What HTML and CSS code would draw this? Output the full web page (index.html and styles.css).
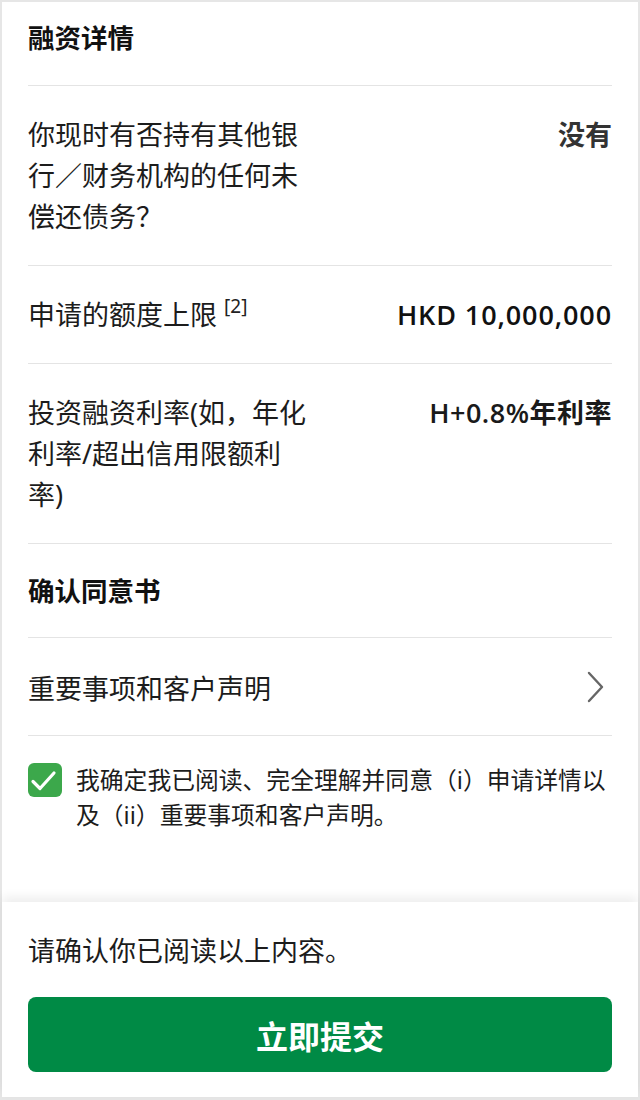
FILE: index.html
```html
<!DOCTYPE html>
<html lang="zh-CN">
<head>
<meta charset="utf-8">
<title>融资详情</title>
<link rel="stylesheet" href="styles.css">
</head>
<body>
<div class="screen">
  <main class="content">
    <h2 class="section-title first">融资详情</h2>
    <div class="row">
      <div class="label">你现时有否持有其他银行／财务机构的任何未偿还债务？</div>
      <div class="value value-gray">没有</div>
    </div>
    <div class="row">
      <div class="label">申请的额度上限 <sup class="note">[2]</sup></div>
      <div class="value value-strong">HKD 10,000,000</div>
    </div>
    <div class="row">
      <div class="label">投资融资利率(如，年化利率/超出信用限额利率)</div>
      <div class="value value-medium">H+0.8%年利率</div>
    </div>
    <h2 class="section-title">确认同意书</h2>
    <div class="link-row">
      <span class="link-text">重要事项和客户声明</span>
      <svg class="chevron" width="20" height="32" viewBox="0 0 20 32"><polyline points="3,2 16,16 3,30" fill="none" stroke="#666" stroke-width="2.4" stroke-linecap="round" stroke-linejoin="round"/></svg>
    </div>
    <div class="consent">
      <span class="checkbox">
        <svg width="34" height="34" viewBox="0 0 34 34"><polyline points="5,18.5 12,25.5 26,10" fill="none" stroke="#fff" stroke-width="3.2" stroke-linecap="round" stroke-linejoin="round"/></svg>
      </span>
      <p class="consent-text">我确定我已阅读、完全理解并同意（i）申请详情以及（ii）重要事项和客户声明。</p>
    </div>
  </main>
  <footer class="footer">
    <p class="footer-text">请确认你已阅读以上内容。</p>
    <button class="submit">立即提交</button>
  </footer>
</div>
</body>
</html>
```

FILE: styles.css
```css
* { box-sizing: border-box; }
html, body { margin: 0; padding: 0; }
body {
  background: #e6e6e6;
  padding: 2px 2px 3px 2px;
  font-family: "Noto Sans", "Noto Sans CJK SC", sans-serif;
  color: #1c1c1c;
}
.screen {
  background: #fff;
  height: 1095px;
  display: flex;
  flex-direction: column;
}
.content {
  flex: 1;
  padding: 0 26px;
}
.section-title {
  margin: 0;
  font-size: 26.5px;
  font-weight: 700;
  line-height: 36px;
  color: #111;
  padding: 29px 0 28px;
  border-bottom: 1px solid #e4e4e4;
}
.section-title.first {
  padding-top: 18px;
  padding-bottom: 29px;
}
.row {
  display: flex;
  justify-content: space-between;
  align-items: flex-start;
  padding: 28px 0 28px;
  border-bottom: 1px solid #e4e4e4;
  font-size: 27px;
  line-height: 41px;
}
.label {
  flex: 0 1 284px;
  color: #1c1c1c;
}
.note {
  font-size: 19px;
  line-height: 0;
  vertical-align: 12px;
  color: #222;
}
.value {
  text-align: right;
  margin-left: 16px;
}
.value-gray { font-weight: 700; color: #333; }
.value-strong {
  font-family: "Open Sans", "Noto Sans CJK SC", sans-serif;
  font-weight: 600;
  letter-spacing: 0.9px;
  color: #111;
}
.value-medium {
  font-family: "Open Sans", "Noto Sans CJK SC", sans-serif;
  font-weight: 600;
  letter-spacing: 0.5px;
  color: #1a1a1a;
}
.link-row {
  display: flex;
  justify-content: space-between;
  align-items: center;
  padding: 30px 0 26px;
  border-bottom: 1px solid #e4e4e4;
  font-size: 27px;
  line-height: 41px;
}
.chevron { margin-right: 6px; margin-top: -4px; }
.consent {
  display: flex;
  align-items: flex-start;
  gap: 14px;
  padding-top: 27px;
}
.checkbox {
  flex: 0 0 34px;
  width: 34px;
  height: 34px;
  border-radius: 6px;
  background: #3ca84b;
  display: flex;
}
.consent-text {
  margin: 0;
  font-size: 23.8px;
  line-height: 35px;
  color: #1c1c1c;
}
.footer {
  padding: 28px 26px 25px;
  box-shadow: 0 -5px 10px rgba(0, 0, 0, 0.07);
  background: #fff;
}
.footer-text {
  margin: 0 0 26px;
  font-size: 27px;
  line-height: 41px;
  color: #1c1c1c;
}
.submit {
  display: block;
  width: 100%;
  height: 75px;
  border: 0;
  border-radius: 8px;
  background: #008a45;
  color: #fff;
  font-family: "Noto Sans", "Noto Sans CJK SC", sans-serif;
  font-size: 32px;
  font-weight: 700;
}
```
